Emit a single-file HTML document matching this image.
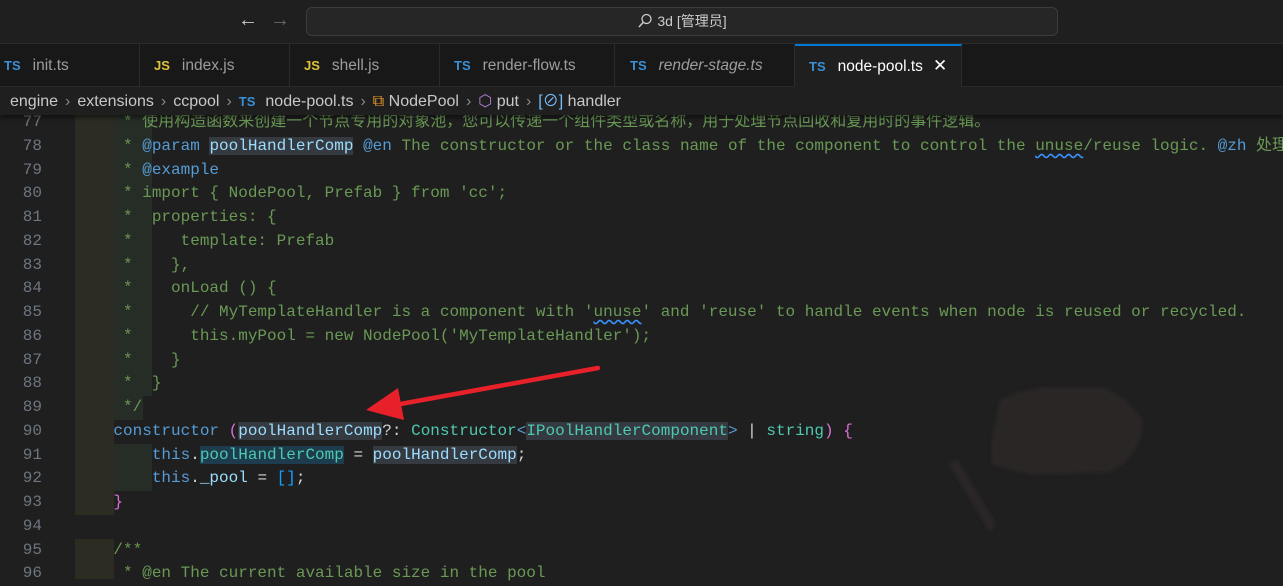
<!DOCTYPE html>
<html><head><meta charset="utf-8"><style>
*{margin:0;padding:0;box-sizing:border-box}
body{width:1283px;height:570px;overflow:hidden;background:#1f1f1f;position:relative;font-family:"Liberation Sans","Noto Sans CJK SC",sans-serif;color:#ccc}
.top{position:absolute;left:0;top:0;width:1283px;height:44px;background:#1f1f1f;border-bottom:1px solid #2b2b2b}
.search{position:absolute;left:306px;top:7px;width:752px;height:29px;border:1px solid #3c3c3c;border-radius:6px;background:#262626;font-size:14px;color:#ccc;text-align:center;line-height:27px}
.tabs{position:absolute;left:0;top:44px;width:1283px;height:43px;background:#181818;border-bottom:1px solid #2b2b2b}
.tab{position:absolute;top:0;height:43px;border-right:1px solid #2b2b2b;font-size:15.5px;line-height:44px;color:#9d9d9d;padding-left:4px;white-space:nowrap}
.tab b{font-size:13px;font-weight:bold;margin-right:12px;font-family:"Liberation Sans",sans-serif}
.ts{color:#3a8fd6}.js{color:#e0c33a}
.act{background:#1f1f1f;border-top:2px solid #0078d4;color:#fff;height:44px;line-height:40px}
.crumb{position:absolute;left:0;top:87px;width:1283px;height:28px;background:#1f1f1f;font-size:16px;color:#c8c8c8;line-height:30px;padding-left:10px;white-space:nowrap;box-shadow:0 3px 4px rgba(0,0,0,.45);z-index:5}
.crumb i{font-style:normal;color:#888;margin:0 7px}
.code{position:absolute;left:0;top:111px;width:1283px}
.ln{position:absolute;left:0;width:42px;text-align:right;color:#6e7681;font:16px/23.75px "Liberation Mono",monospace}
.l{position:absolute;left:75px;height:23.75px;font:16px/23.75px "Liberation Mono","Noto Sans CJK SC",monospace;white-space:pre;color:#d4d4d4}
.c{color:#6a9955}.k{color:#569cd6}.v{color:#9cdcfe}.t{color:#4ec9b0}.p{color:#da70d6}.b{color:#179fff}
.hl{background:#343a40}.hb{background:#1d3c4e}
.sq{text-decoration:underline wavy #3794ff;text-underline-offset:3px}
.band{position:absolute}
</style></head><body>
<div class="top">
 <div style="position:absolute;left:238px;top:9px;font-size:20px;color:#ccc">&#8592;</div>
 <div style="position:absolute;left:270px;top:9px;font-size:20px;color:#666">&#8594;</div>
 <div class="search"><svg width="16" height="16" viewBox="0 0 16 16" style="vertical-align:-3px;margin-right:4px"><circle cx="9.5" cy="6" r="4.5" fill="none" stroke="#ccc" stroke-width="1.3"/><path d="M6.3 9.2 L2 14" stroke="#ccc" stroke-width="1.5"/></svg>3d [管理员]</div>
</div>
<div class="tabs">
 <div class="tab" style="left:0;width:140px"><b class="ts">TS</b>init.ts</div>
 <div class="tab" style="left:140px;width:150px;padding-left:14px"><b class="js">JS</b>index.js</div>
 <div class="tab" style="left:290px;width:150px;padding-left:14px"><b class="js">JS</b>shell.js</div>
 <div class="tab" style="left:440px;width:175px;padding-left:14px"><b class="ts">TS</b>render-flow.ts</div>
 <div class="tab" style="left:615px;width:180px;padding-left:15px"><b class="ts">TS</b><span style="font-style:italic">render-stage.ts</span></div>
 <div class="tab act" style="left:795px;width:167px;padding-left:14px"><b class="ts">TS</b>node-pool.ts<span style="margin-left:10px;font-size:17px">✕</span></div>
</div>
<div class="crumb">engine<i>›</i>extensions<i>›</i>ccpool<i>›</i><b class="ts" style="font-size:13px;margin-right:10px">TS</b>node-pool.ts<i>›</i><span style="color:#ee9d28">⧉</span> NodePool<i>›</i><span style="color:#b180d7">⬡</span> put<i>›</i><span style="color:#75beff">[⊘]</span> handler</div>
<div class="code">
 <div class="band" style="left:75px;top:0;width:39px;height:308.75px;background:#2d2c22"></div>
 <div class="band" style="left:75px;top:308.75px;width:39px;height:95px;background:#2d2c22"></div>
 <div class="band" style="left:75px;top:427.5px;width:39px;height:40px;background:#2d2c22"></div>
 <div class="band" style="left:114px;top:0;width:38px;height:285px;background:#262d27"></div>
 <div class="band" style="left:114px;top:285px;width:29px;height:23.75px;background:#262d27"></div>
 <div class="band" style="left:114px;top:332.5px;width:38px;height:47.5px;background:#262d27"></div>

 <div class="ln" style="top:0">77</div><div class="ln" style="top:23.75px">78</div><div class="ln" style="top:47.5px">79</div><div class="ln" style="top:71.25px">80</div><div class="ln" style="top:95px">81</div><div class="ln" style="top:118.75px">82</div><div class="ln" style="top:142.5px">83</div><div class="ln" style="top:166.25px">84</div><div class="ln" style="top:190px">85</div><div class="ln" style="top:213.75px">86</div><div class="ln" style="top:237.5px">87</div><div class="ln" style="top:261.25px">88</div><div class="ln" style="top:285px">89</div><div class="ln" style="top:308.75px">90</div><div class="ln" style="top:332.5px">91</div><div class="ln" style="top:356.25px">92</div><div class="ln" style="top:380px">93</div><div class="ln" style="top:403.75px">94</div><div class="ln" style="top:427.5px">95</div><div class="ln" style="top:451.25px">96</div>

 <div class="l c" style="top:0">     * 使用构造函数来创建一个节点专用的对象池，您可以传递一个组件类型或名称，用于处理节点回收和复用时的事件逻辑。</div>
 <div class="l c" style="top:23.75px">     * <span class="k">@param</span> <span class="v hl">poolHandlerComp</span> <span class="k">@en</span> The constructor or the class name of the component to control the <span class="sq">unuse</span>/reuse logic. <span class="k">@zh</span> 处理</div>
 <div class="l c" style="top:47.5px">     * <span class="k">@example</span></div>
 <div class="l c" style="top:71.25px">     * import { NodePool, Prefab } from 'cc';</div>
 <div class="l c" style="top:95px">     *  properties: {</div>
 <div class="l c" style="top:118.75px">     *     template: Prefab</div>
 <div class="l c" style="top:142.5px">     *    },</div>
 <div class="l c" style="top:166.25px">     *    onLoad () {</div>
 <div class="l c" style="top:190px">     *      // MyTemplateHandler is a component with '<span class="sq">unuse</span>' and 'reuse' to handle events when node is reused or recycled.</div>
 <div class="l c" style="top:213.75px">     *      this.myPool = new NodePool('MyTemplateHandler');</div>
 <div class="l c" style="top:237.5px">     *    }</div>
 <div class="l c" style="top:261.25px">     *  }</div>
 <div class="l c" style="top:285px">     */</div>
 <div class="l" style="top:308.75px">    <span class="k">constructor</span> <span class="p">(</span><span class="v hl">poolHandlerComp</span>?: <span class="t">Constructor</span><span class="k">&lt;</span><span class="t hl">IPoolHandlerComponent</span><span class="k">&gt;</span> | <span class="t">string</span><span class="p">)</span> <span class="p">{</span></div>
 <div class="l" style="top:332.5px">        <span class="k">this</span>.<span class="t hb">poolHandlerComp</span> = <span class="v hl">poolHandlerComp</span>;</div>
 <div class="l" style="top:356.25px">        <span class="k">this</span>.<span class="v">_pool</span> = <span class="b">[]</span>;</div>
 <div class="l" style="top:380px">    <span class="p">}</span></div>
 <div class="l c" style="top:427.5px">    /**</div>
 <div class="l c" style="top:451.25px">     * @en The current available size in the pool</div>
</div>
<svg style="position:absolute;left:0;top:0" width="1283" height="570">
 <defs><filter id="bl"><feGaussianBlur stdDeviation="2"/></filter></defs>
 <g filter="url(#bl)" fill="#2c2526">
 <path d="M1000 400 L1020 392 L1040 388 L1105 388 L1125 400 L1143 420 L1140 440 L1128 460 L1110 472 L1030 474 L992 465 L992 440 Z"/>
 <path d="M948 462 L958 460 L996 525 L990 532 Z"/>
 </g>
 <line x1="598" y1="368" x2="395" y2="405" stroke="#e8202a" stroke-width="4.5" stroke-linecap="round"/>
 <path d="M366 410 L398 388 L404 420 Z" fill="#e8202a"/>
</svg>
</body></html>
